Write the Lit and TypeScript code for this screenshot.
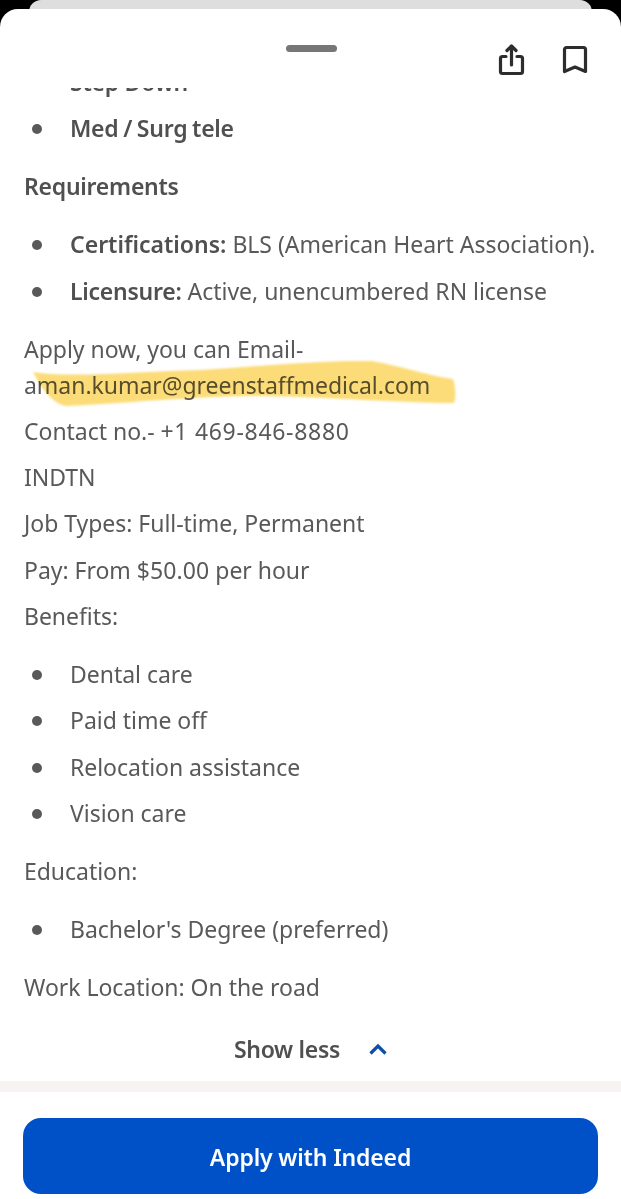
import { LitElement, html, css } from 'lit'
import { customElement } from 'lit/decorators.js'

@customElement('app-root')
export class AppRoot extends LitElement {
  static styles = css`
    :host {
      display: block;
      position: relative;
      width: 621px;
      height: 1199px;
      overflow: hidden;
      background: #000;
      font-family: 'Noto Sans', sans-serif;
      color: #595959;
    }
    .behind {
      height: 30px;
      margin: 0 29px -21px;
      background: #dedede;
      border-radius: 12px 12px 0 0;
    }
    .sheet {
      position: relative;
      height: 1190px;
      background: #fff;
      border-radius: 18px 18px 0 0;
      display: flex;
      flex-direction: column;
    }
    .head {
      position: relative;
      height: 79px;
      flex: none;
    }
    .handle {
      position: absolute;
      left: 286px;
      top: 36px;
      width: 51px;
      height: 7px;
      border-radius: 4px;
      background: #767676;
    }
    .icon {
      position: absolute;
      fill: none;
      stroke: #2d2d2d;
      stroke-width: 3.2;
      stroke-linejoin: round;
      stroke-linecap: round;
    }
    .share { left: 498px; top: 34px; }
    .mark { left: 562px; top: 36px; }
    .scroll {
      position: relative;
      height: 993px;
      flex: none;
      overflow: hidden;
    }
    .body {
      position: relative;
      margin-top: -24px;
      padding: 0 24px;
      font-size: 23px;
      line-height: 36px;
      letter-spacing: -0.03px;
    }
    p { margin: 0 0 10.3px; }
    ul { margin: 22px 0 22px; padding: 0; list-style: none; }
    li {
      display: flex;
      align-items: center;
      margin-bottom: 10.3px;
      white-space: nowrap;
    }
    li::before {
      content: '';
      width: 10px;
      height: 10px;
      margin: 0 28px 0 8px;
      border-radius: 50%;
      background: #595959;
      flex: none;
      position: relative;
      top: 1px;
    }
    ul.top { margin-top: 0; }
    b { font-weight: 600; color: #505050; margin-right: 6px; letter-spacing: -0.25px; }
    b.wide { letter-spacing: 0; }
    b.tight { word-spacing: -1px; }
    .num { letter-spacing: 0.7px; }
    .money { letter-spacing: 0.1px; }
    .swash {
      position: absolute;
      left: 0;
      top: 0;
      mix-blend-mode: multiply;
      pointer-events: none;
      filter: blur(1.2px);
    }
    .less {
      position: absolute;
      left: 0;
      right: 0;
      top: 941px;
      display: flex;
      justify-content: center;
      align-items: center;
      gap: 29px;
      height: 40px;
      font-size: 23px;
      font-weight: 600;
      color: #505050;
      letter-spacing: -0.3px;
    }
    .strip {
      height: 11px;
      flex: none;
      background: #f6f3f2;
    }
    .foot {
      padding: 26px 23px 0 23px;
    }
    .apply {
      display: flex;
      align-items: center;
      justify-content: center;
      height: 76px;
      padding-top: 2px;
      box-sizing: border-box;
      border-radius: 18px;
      background: #0050c8;
      color: #fff;
      font-size: 23px;
      font-weight: 600;
      letter-spacing: -0.15px;
    }
  `

  render() {
    return html`
      <div class="behind"></div>
      <div class="sheet">
        <div class="head">
          <div class="handle"></div>
          <svg class="icon share" width="27" height="34" viewBox="0 0 27 34">
            <path d="M8 13.500H4.500a2 2 0 0 0-2 2V28.500a2 2 0 0 0 2 2H22.500a2 2 0 0 0 2-2V15.500a2 2 0 0 0-2-2H19" />
            <path d="M13.500 22V3M9 7.500l4.500-4.500L18 7.500" />
          </svg>
          <svg class="icon mark" width="26" height="30" viewBox="0 0 26 30">
            <path d="M4.500 2.500h17a2 2 0 0 1 2 2V26.500L13 22 2.500 26.500V4.500a2 2 0 0 1 2-2z" />
          </svg>
        </div>
        <div class="scroll">
          <div class="body">
            <ul class="top">
              <li><b>Step Down</b></li>
              <li><b class="tight">Med / Surg tele</b></li>
            </ul>
            <p><b>Requirements</b></p>
            <ul>
              <li><b class="wide">Certifications:</b> BLS (American Heart Association).</li>
              <li><b>Licensure:</b> Active, unencumbered RN license</li>
            </ul>
            <p>Apply now, you can Email-<br />aman.kumar@greenstaffmedical.com</p>
            <p>Contact no.- <span class="num">+1 469-846-8880</span></p>
            <p>INDTN</p>
            <p>Job Types: Full-time, Permanent</p>
            <p>Pay: From <span class="money">$50.00</span> per hour</p>
            <p>Benefits:</p>
            <ul>
              <li>Dental care</li>
              <li>Paid time off</li>
              <li>Relocation assistance</li>
              <li>Vision care</li>
            </ul>
            <p>Education:</p>
            <ul>
              <li>Bachelor's Degree (preferred)</li>
            </ul>
            <p>Work Location: On the road</p>
          </div>
          <svg class="swash" width="621" height="400" viewBox="0 88 621 400">
            <path
              fill="#fcdc78"
              d="M33 372 C70 378 130 372 200 370 C260 366 320 360 372 361 C400 366 430 376 453 379 C456 388 456 398 454 403 C400 403 330 397 260 396 C190 396 120 404 66 406 C50 403 40 385 33 372z"
            />
          </svg>
          <div class="less">
            <span>Show less</span>
            <svg width="18" height="12" viewBox="0 0 18 12" fill="none" stroke="#0d4fa8" stroke-width="3.200">
              <path d="M1.500 10.500L9 3l7.500 7.500" />
            </svg>
          </div>
        </div>
        <div class="strip"></div>
        <div class="foot">
          <div class="apply">Apply with Indeed</div>
        </div>
      </div>
    `
  }
}
